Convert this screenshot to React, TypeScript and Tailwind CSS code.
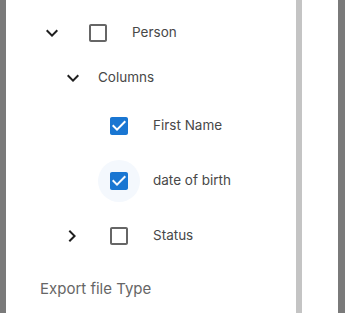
const CHECKED =
  'M19 3H5c-1.11 0-2 .9-2 2v14c0 1.1.89 2 2 2h14c1.11 0 2-.9 2-2V5c0-1.1-.89-2-2-2zm-9 14l-5-5 1.41-1.41L10 14.17l7.59-7.59L19 8l-9 9z'
const UNCHECKED =
  'M19 5v14H5V5h14m0-2H5c-1.1 0-2 .9-2 2v14c0 1.1.9 2 2 2h14c1.1 0 2-.9 2-2V5c0-1.1-.9-2-2-2z'

function Chevron({ open }: { open: boolean }) {
  return (
    <svg viewBox="0 0 24 24" className="w-6 h-6 shrink-0 fill-[#1f1f1f]">
      {open ? (
        <path d="M16.59 8.59 12 13.17 7.41 8.59 6 10l6 6 6-6z" />
      ) : (
        <path d="M10 6 8.59 7.41 13.17 12l-4.58 4.59L10 18l6-6z" />
      )}
    </svg>
  )
}

function Checkbox({ checked, focus }: { checked: boolean; focus?: boolean }) {
  return (
    <span className="relative flex items-center justify-center w-[42px] h-[42px] shrink-0">
      {focus && <span className="absolute inset-0 rounded-full bg-[#f4f8fd]" />}
      <svg viewBox="0 0 24 24" className={`relative w-6 h-6 ${checked ? 'fill-[#1976d2]' : 'fill-[#666666]'}`}>
        <path d={checked ? CHECKED : UNCHECKED} />
      </svg>
    </span>
  )
}

const label = 'text-[13.5px] text-[#484848] leading-none'

export default function App() {
  return (
    <div className="flex h-[313px] w-[345px] bg-white" style={{ fontFamily: 'Inter, "Noto Sans", sans-serif' }}>
      <div className="w-[6px] bg-[#7a7a7a]" />
      <div className="w-[290px] pl-[34px] pt-[12px]">
        <div className="flex items-center h-[42px]">
          <Chevron open />
          <span className="ml-[13px]"><Checkbox checked={false} /></span>
          <span className={`${label} ml-[13px]`}>Person</span>
        </div>
        <div className="flex items-center h-[42px] mt-[3px] pl-[21px]">
          <Chevron open />
          <span className={`${label} ml-[13px]`}>Columns</span>
        </div>
        <div className="flex items-center h-[42px] mt-[6px] pl-[58px]">
          <Checkbox checked />
          <span className={`${label} ml-[13px]`}>First Name</span>
        </div>
        <div className="flex items-center h-[42px] mt-[13px] pl-[58px]">
          <Checkbox checked focus />
          <span className={`${label} ml-[13px]`}>date of birth</span>
        </div>
        <div className="flex items-center h-[42px] mt-[13px] pl-[20px]">
          <Chevron open={false} />
          <span className="ml-[14px]"><Checkbox checked={false} /></span>
          <span className={`${label} ml-[13px]`}>Status</span>
        </div>
        <div className="mt-[24px] text-[15px] text-[#666666] leading-none">Export file Type</div>
      </div>
      <div className="w-[6px] bg-[#c4c4c4]" />
      <div className="w-[36px]" />
      <div className="w-[7px] bg-[#7a7a7a]" />
    </div>
  )
}
